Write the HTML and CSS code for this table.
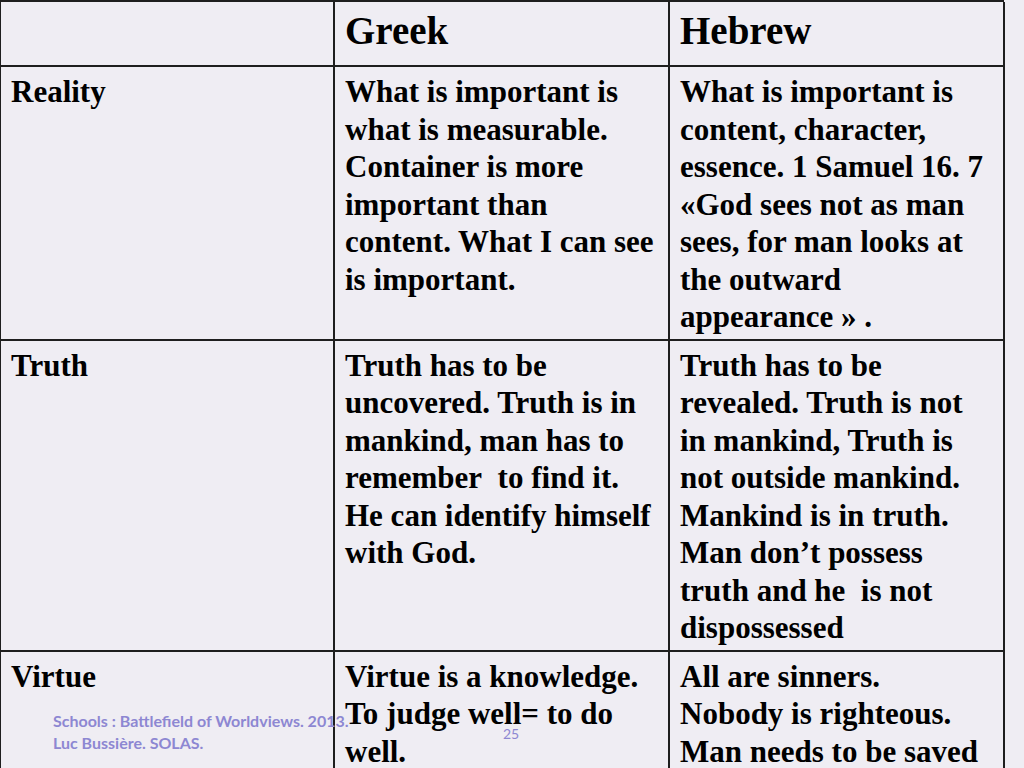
FILE: index.html
```html
<!DOCTYPE html>
<html lang="en">
<head>
<meta charset="utf-8">
<title>Greek vs Hebrew</title>
<link rel="stylesheet" href="styles.css">
</head>
<body>
<div class="slide">
  <div class="table">
    <div class="cell head"></div>
    <div class="cell head">Greek</div>
    <div class="cell head c3">Hebrew</div>

    <div class="cell">Reality</div>
    <div class="cell">What is important is what is measurable. Container is more important than content. What I can see is important.</div>
    <div class="cell c3">What is important is content, character, essence. 1 Samuel 16. 7 «God sees not as man sees, for man looks at the outward appearance » .</div>

    <div class="cell">Truth</div>
    <div class="cell">Truth has to be uncovered. Truth is in mankind, man has to remember&nbsp; to find it. He can identify himself with God.</div>
    <div class="cell c3">Truth has to be revealed. Truth is not in mankind, Truth is not outside mankind. Mankind is in truth. Man don’t possess truth and he&nbsp; is not dispossessed</div>

    <div class="cell">Virtue</div>
    <div class="cell">Virtue is a knowledge. To judge well= to do well.</div>
    <div class="cell c3">All are sinners. Nobody is righteous. Man needs to be saved</div>
  </div>
  <div class="footer">Schools : Battlefield of Worldviews. 2013.<br>Luc Bussière. SOLAS.</div>
  <div class="pagenum">25</div>
</div>
</body>
</html>
```

FILE: styles.css
```css
* { box-sizing: border-box; }
html, body {
  margin: 0;
  padding: 0;
  background: #efedf3;
}
.slide {
  position: relative;
  width: 1024px;
  height: 768px;
  overflow: hidden;
  background: #efedf3;
}
.table {
  display: grid;
  grid-template-columns: 334px 335px 335px;
  width: 1004px;
  border-top: 2px solid #1e1e1e;
  border-left: 1px solid #1e1e1e;
  font-family: "Liberation Serif", "Times New Roman", serif;
  font-weight: bold;
  color: #000;
}
.cell {
  border-right: 2px solid #1e1e1e;
  border-bottom: 2px solid #1e1e1e;
  padding: 6px 12px 3px 10px;
  font-size: 31px;
  line-height: 37.5px;
}
.cell.c3 {
  padding-right: 15px;
}
.cell.head {
  height: 65px;
  padding-top: 5px;
  font-size: 39px;
  line-height: 47px;
}
.footer {
  position: absolute;
  left: 53px;
  top: 710px;
  font-family: Lato, "Open Sans", sans-serif;
  font-size: 16px;
  line-height: 22px;
  font-weight: bold;
  color: #8d87d2;
}
.pagenum {
  position: absolute;
  left: 503px;
  top: 725px;
  font-family: Lato, "Open Sans", sans-serif;
  font-size: 14px;
  color: #8d87d2;
}
```
